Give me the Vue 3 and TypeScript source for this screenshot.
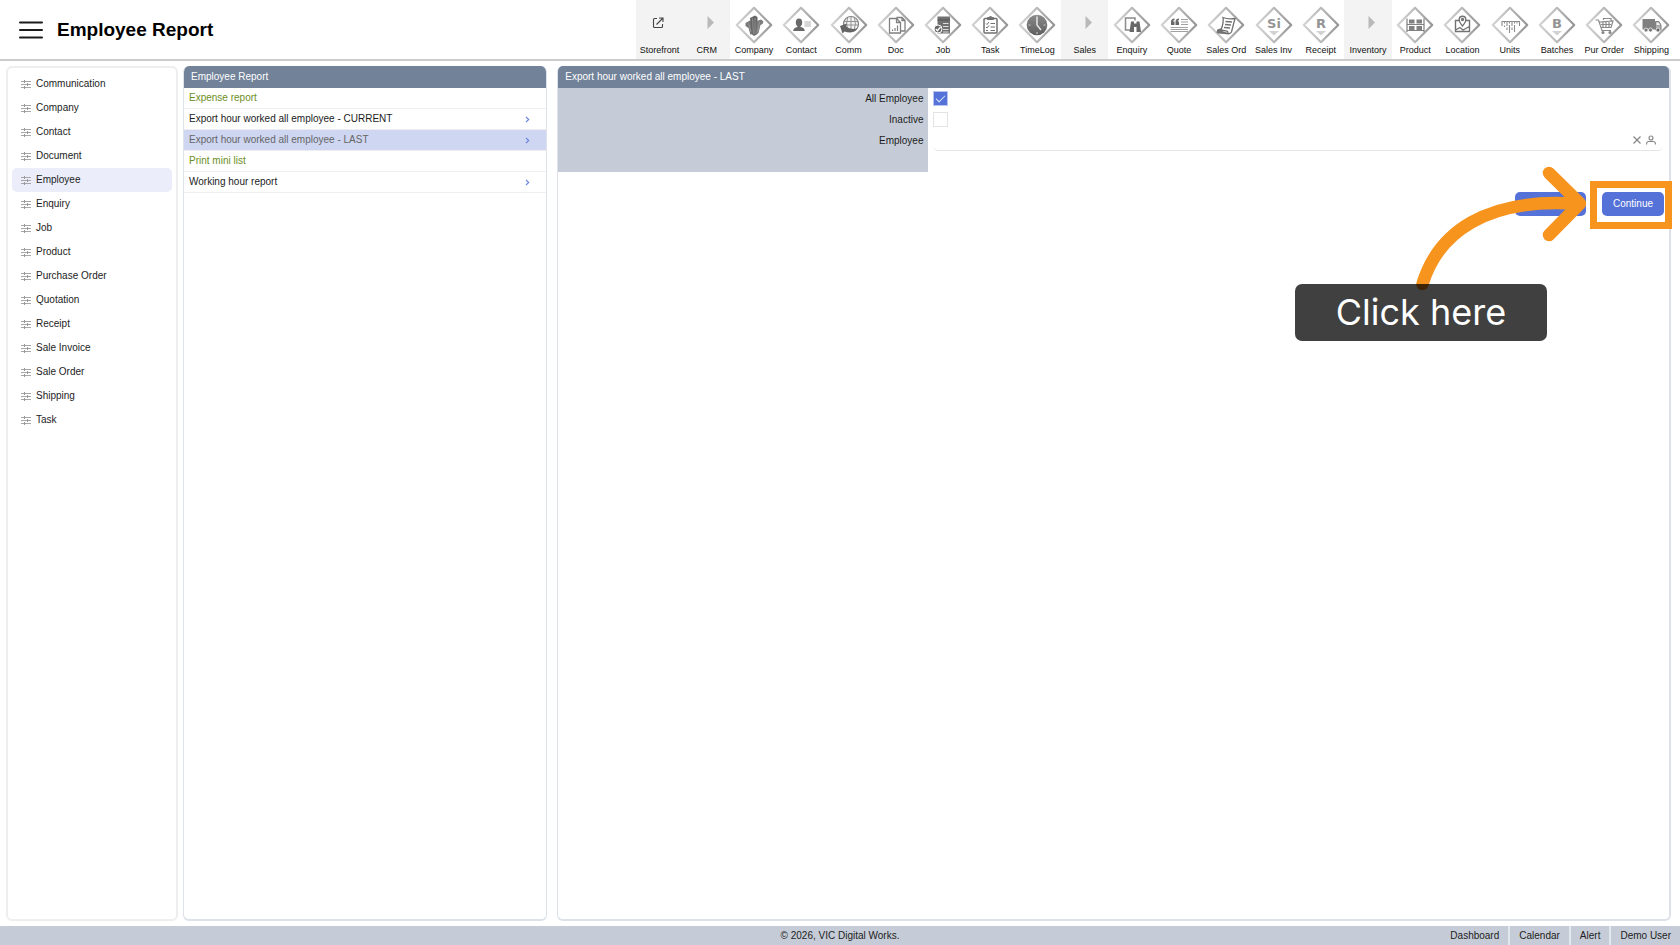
<script setup lang="ts">
import { ref } from 'vue'

interface Tool {
  label: string
  icon: string
  section?: boolean
}

interface Report {
  label: string
  kind: 'print' | 'form'
}

const tools: Tool[] = [
  { label: 'Storefront', icon: 'external', section: true },
  { label: 'CRM', icon: 'triangle', section: true },
  { label: 'Company', icon: 'company' },
  { label: 'Contact', icon: 'contact' },
  { label: 'Comm', icon: 'comm' },
  { label: 'Doc', icon: 'doc' },
  { label: 'Job', icon: 'job' },
  { label: 'Task', icon: 'task' },
  { label: 'TimeLog', icon: 'time' },
  { label: 'Sales', icon: 'triangle', section: true },
  { label: 'Enquiry', icon: 'enquiry' },
  { label: 'Quote', icon: 'quote' },
  { label: 'Sales Ord', icon: 'order' },
  { label: 'Sales Inv', icon: 'Si' },
  { label: 'Receipt', icon: 'R' },
  { label: 'Inventory', icon: 'triangle', section: true },
  { label: 'Product', icon: 'product' },
  { label: 'Location', icon: 'location' },
  { label: 'Units', icon: 'units' },
  { label: 'Batches', icon: 'B' },
  { label: 'Pur Order', icon: 'cart' },
  { label: 'Shipping', icon: 'truck' },
]

const categories: string[] = [
  'Communication', 'Company', 'Contact', 'Document', 'Employee', 'Enquiry', 'Job', 'Product',
  'Purchase Order', 'Quotation', 'Receipt', 'Sale Invoice', 'Sale Order', 'Shipping', 'Task',
]

const reports: Report[] = [
  { label: 'Expense report', kind: 'print' },
  { label: 'Export hour worked all employee - CURRENT', kind: 'form' },
  { label: 'Export hour worked all employee - LAST', kind: 'form' },
  { label: 'Print mini list', kind: 'print' },
  { label: 'Working hour report', kind: 'form' },
]

const footerLinks: string[] = ['Dashboard', 'Calendar', 'Alert', 'Demo User']

const activeCategory = ref('Employee')
const activeReport = ref('Export hour worked all employee - LAST')
const allEmployee = ref(true)
const inactive = ref(false)
const employee = ref('')
</script>

<template>
  <div class="app">
    <header class="topbar">
      <button class="menu" type="button" aria-label="Menu">
        <svg width="24" height="18" viewBox="0 0 24 18">
          <path d="M1 1.500H23M1 9H23M1 16.500H23" fill="none" stroke="#1c1c1c" stroke-width="2" stroke-linecap="round" />
        </svg>
      </button>
      <h1>Employee Report</h1>
      <nav class="tools">
        <a v-for="tool in tools" :key="tool.label" href="#" class="tool" :class="{ section: tool.section }">
          <svg class="tool-icon" viewBox="0 0 38 38" width="38" height="38" aria-hidden="true">
            <defs>
              <linearGradient id="edge" x1="0" y1="0.5" x2="1" y2="0.5">
                <stop offset="0" stop-color="#d2d2d2" />
                <stop offset="0.5" stop-color="#bababa" />
                <stop offset="1" stop-color="#949494" />
              </linearGradient>
              <linearGradient id="shade" x1="0" y1="0" x2="0" y2="1">
                <stop offset="0" stop-color="#8a8a8a" />
                <stop offset="1" stop-color="#5e5e5e" />
              </linearGradient>
            </defs>
            <path v-if="!tool.section" d="M19 1.800L36.200 19L19 36.200L1.800 19Z" fill="#fff" stroke="url(#edge)" stroke-width="2.200" stroke-linejoin="round" />

            <g v-if="tool.icon === 'external'" fill="none" stroke="#444" stroke-width="1.100">
              <path d="M16 12.500H13.500Q12.500 12.500 12.500 13.500V20.500Q12.500 21.500 13.500 21.500H20.500Q21.500 21.500 21.500 20.500V18M15.500 18.500L21.500 12.500M18 12H22V16" />
            </g>
            <path v-else-if="tool.icon === 'triangle'" d="M19.500 10L26 16.500L19.500 23Z" fill="#b9b9b9" />
            <g v-else-if="tool.icon === 'company'">
              <path d="M10.500 17L15 14.500L17 16L18 27L15.500 29L13.500 22L10.500 20Z" fill="#777" />
              <path d="M15 12L20 9.500L22.500 11V28L19 30L16.500 28Z" fill="#666" />
              <path d="M22 15L26 13.500L28.500 15.500L27.500 18L25.500 19L23.500 27L21 28.500Z" fill="#7c7c7c" />
              <path d="M17.500 12.500L18.500 28M20 12V28M24.500 16L22.500 26M13.500 17L16 26" stroke="#a8a8a8" stroke-width=".6" fill="none" />
            </g>
            <g v-else-if="tool.icon === 'contact'" fill="#686868">
              <ellipse cx="17" cy="16.500" rx="3.200" ry="4" />
              <path d="M15.500 19H18.500V21Q22.500 21.500 22.800 25H11.200Q11.500 21.500 15.500 21Z" />
              <path d="M22.500 16H29M22.500 18H29M22.500 20H29" stroke="#b0b0b0" stroke-width="1" />
            </g>
            <g v-else-if="tool.icon === 'comm'">
              <circle cx="21" cy="18" r="7.500" fill="#f2f2f2" stroke="#808080" stroke-width="1.200" />
              <path d="M14 15.500H28M14 19H28M21 10.500V25M17.500 11.500Q15.500 18 18 25M24.500 11.500Q26.500 18 24 25" fill="none" stroke="#8a8a8a" stroke-width=".9" />
              <path d="M10 20L17 17.500L16 20.500Q20 24 27.500 22.500Q23 28.500 14.500 25.500L12.500 27.500Z" fill="#646464" />
            </g>
            <g v-else-if="tool.icon === 'doc'" fill="none" stroke="#808080" stroke-width="1.300">
              <path d="M20 14V11.500H25L28 14.500V25H24M25 11.500V14.500H28" />
              <path d="M12.500 12.500H19.500L23.500 16.500V27H12.500ZM19.500 12.500V16.500H23.500" fill="#fff" />
              <path d="M15.500 25V23.500M18 25V22M20.500 25V19.500" stroke-width="1.200" />
            </g>
            <g v-else-if="tool.icon === 'job'">
              <path d="M13.500 10.500H26V27.500H13.500Z" fill="#707070" />
              <path d="M13.500 14H26" stroke="#555" />
              <path d="M19 17.500H24.500M19 20.500H24.500M19 23.500H24.500M19 26H24.500" stroke="#ddd" stroke-width="1" />
              <circle cx="14" cy="23" r="4" fill="#666" stroke="#fff" />
              <path d="M11.800 23L13.500 24.700L16.500 21" stroke="#fff" stroke-width="1.300" fill="none" />
            </g>
            <g v-else-if="tool.icon === 'task'" fill="none" stroke="#707070">
              <rect x="13" y="12.500" width="13" height="14.500" rx="1" stroke-width="1.500" />
              <path d="M16.500 13.500V11.500H18L19.500 10L21 11.500H22.500V13.500Z" fill="#707070" />
              <path d="M15 17.500L16 18.500L18 16M15 21L16 22L18 19.500M15 24.500H17M19.500 17.500H24M19.500 21H24M19.500 24.500H24" />
            </g>
            <g v-else-if="tool.icon === 'time'">
              <circle cx="19" cy="19" r="10.300" fill="url(#shade)" />
              <path d="M19 11V19L23 24" fill="none" stroke="#e6e6e6" stroke-width="1.500" />
              <path d="M10.500 19H12.500M25.500 19H27.500M19 26V28M19 9.500V11" stroke="#ccc" />
            </g>
            <g v-else-if="tool.icon === 'enquiry'">
              <path d="M17 24H12.500V12H22V14.500" fill="none" stroke="#8a8a8a" stroke-width="1.500" />
              <path d="M18 15.500H21V17.500H23.500V15.500H26.500L28 26H23.500V21H21V26H16.500Z" fill="#686868" />
            </g>
            <g v-else-if="tool.icon === 'quote'">
              <path d="M11 16Q11 12.500 14.500 12.500V14Q13 14.500 13 15.500H14.500V19H11ZM15.500 16Q15.500 12.500 19 12.500V14Q17.500 14.500 17.500 15.500H19V19H15.500Z" fill="#666" />
              <path d="M21 13.500H28M21 16H28M21 18.500H28M10.500 21.500H28M10.500 23.500H28M10.500 25.500H28" stroke="#a2a2a2" stroke-width="1.100" />
            </g>
            <g v-else-if="tool.icon === 'order'" fill="none" stroke="#727272" stroke-width="1.300">
              <path d="M16 11.500Q21 13.500 28 12.500Q26.500 18 24.500 26Q23 28.500 20 27.500Q15 26.500 10.500 26.500Q10 23 14 23.500Q17 17 16 11.500Z" fill="#fff" />
              <path d="M18.500 15.500L25 16M18 18.500L24 19M17 21.500L23 22M14 24L20 25Q22 27 20 27.500" />
              <path d="M10.500 26.500Q10 23 14 23.500L15 25.500L20 27.500Z" fill="#727272" />
            </g>
            <g v-else-if="['Si', 'R', 'B'].includes(tool.icon)">
              <text x="19" y="22" text-anchor="middle" class="glyph">{{ tool.icon }}</text>
              <path d="M14 25H24L19 29.500Z" fill="#d2d2d2" />
            </g>
            <g v-else-if="tool.icon === 'product'">
              <path d="M11 12.500V26M28 12.500V26M11 18.500H28M11 24.500H28" stroke="#808080" stroke-width="1.200" />
              <path d="M13 13.500H18.500V17.500H13ZM20.500 13.500H26V17.500H20.500ZM13 20H18.500V24H13ZM20.500 20H26V24H20.500Z" fill="#808080" />
            </g>
            <g v-else-if="tool.icon === 'location'" fill="none" stroke="#727272" stroke-width="1.400">
              <path d="M16 14.500H12.500V25.500H26.500V14.500H23M12.500 24L17 21.500L20 24L26.500 20.500" />
              <path d="M19.500 20Q15.800 15.500 16.200 13.500A3.300 3.300 0 0 1 22.800 13.500Q23.200 15.500 19.500 20Z" fill="#fff" />
              <circle cx="19.500" cy="13.500" r="1" />
            </g>
            <path v-else-if="tool.icon === 'units'" d="M10.500 15.500H28.500M11 15V20M13.500 15V17.500M16 15V20M18.500 15V17.500M21 15V20M23.500 15V17.500M26 15V17.500M28.500 15V20M13.500 19.500V21M16 21.500V24M18.500 19V27M21 21.500V24M23.500 19V26" fill="none" stroke="#8c8c8c" stroke-width="1.100" />
            <g v-else-if="tool.icon === 'cart'" fill="none" stroke="#8a8a8a" stroke-width="1.200">
              <path d="M10.500 14H13.500L17 24.500H26M14.500 16L28 15L26 21.500H16.500M16 18.500H26M18 16V21M21 16V21M24 16V21M18.500 14V12.500H26V15" />
              <circle cx="18" cy="26.500" r="1" fill="#777" />
              <circle cx="25" cy="26.500" r="1" fill="#777" />
            </g>
            <g v-else-if="tool.icon === 'truck'">
              <path d="M10.500 13H23V23.500H10.500Z" fill="#808080" />
              <path d="M23.500 15.500H27L29 19V24H23.500Z" fill="#aaa" stroke="#808080" />
              <path d="M24.500 16.500H26.500L28 19H24.500Z" fill="#eee" />
              <circle cx="14" cy="24" r="2" fill="#777" stroke="#fff" stroke-width=".7" />
              <circle cx="18.500" cy="24" r="2" fill="#777" stroke="#fff" stroke-width=".7" />
              <circle cx="26" cy="24" r="2" fill="#666" stroke="#fff" stroke-width=".7" />
            </g>
          </svg>
          <span>{{ tool.label }}</span>
        </a>
      </nav>
    </header>

    <main class="workspace">
      <nav class="sidebar">
        <button
          v-for="category in categories"
          :key="category"
          type="button"
          :class="{ active: category === activeCategory }"
          @click="activeCategory = category"
        >
          <svg width="10" height="9" viewBox="0 0 10 9" aria-hidden="true">
            <path d="M0 1.500H10M0 4.500H10M0 7.500H10" stroke="#a6a6a6" />
            <path d="M3.500 0V3M6.500 3V6M3.500 6V9" stroke="#999" />
          </svg>
          {{ category }}
        </button>
      </nav>

      <div class="content">
        <section class="panel">
          <h2>Employee Report</h2>
          <ul class="reports">
            <li v-for="report in reports" :key="report.label">
              <button
                type="button"
                :class="[report.kind, { active: report.label === activeReport }]"
                @click="activeReport = report.label"
              >
                <span>{{ report.label }}</span>
                <svg v-if="report.kind === 'form'" width="5" height="7" viewBox="0 0 5 7" aria-hidden="true">
                  <path d="M1 1L3.700 3.500L1 6" fill="none" stroke="#6f88de" stroke-width="1.200" />
                </svg>
              </button>
            </li>
          </ul>
        </section>

        <section class="panel detail">
          <h2>Export hour worked all employee - LAST</h2>
          <form class="form" @submit.prevent>
            <div class="labels">
              <label for="all-employee">All Employee</label>
              <label for="inactive">Inactive</label>
              <label for="employee">Employee</label>
            </div>
            <div class="fields">
              <div class="field"><input id="all-employee" v-model="allEmployee" type="checkbox" /></div>
              <div class="field"><input id="inactive" v-model="inactive" type="checkbox" /></div>
              <div class="field lookup">
                <input id="employee" v-model="employee" type="text" />
                <button type="button" aria-label="Clear employee" @click="employee = ''">
                  <svg width="10" height="10" viewBox="0 0 10 10"><path d="M1.500 1.500L8.500 8.500M8.500 1.500L1.500 8.500" stroke="#858585" stroke-width="1.200" /></svg>
                </button>
                <button type="button" aria-label="Find employee">
                  <svg width="10" height="10" viewBox="0 0 10 10" fill="none" stroke="#858585" stroke-width="1.100">
                    <circle cx="5" cy="3" r="2" />
                    <path d="M.6 9.500V8.500Q.6 6.500 3 6.500H7Q9.400 6.500 9.400 8.500V9.500" />
                  </svg>
                </button>
              </div>
            </div>
            <div class="actions">
              <button class="primary back" type="button" aria-label="Back"></button>
              <div class="highlight"><button class="primary" type="submit">Continue</button></div>
              <svg class="arrow" width="180" height="130" viewBox="0 0 180 130" aria-hidden="true">
                <g fill="none" stroke="#f7941e" stroke-width="12.500" stroke-linecap="round" stroke-linejoin="round">
                  <path d="M12.500 119C28 68 76 32 168 39" />
                  <path d="M139 8L170 38.500L139 70" />
                </g>
              </svg>
              <div class="callout">Click here</div>
            </div>
          </form>
        </section>
      </div>
    </main>

    <footer class="footer">
      <span class="copyright">© 2026, VIC Digital Works.</span>
      <nav>
        <a v-for="link in footerLinks" :key="link" href="#">{{ link }}</a>
      </nav>
    </footer>
  </div>
</template>

<style>
body {
  background: #fff;
}
</style>

<style scoped>
.app,
.app * {
  box-sizing: border-box;
}

.app {
  display: flex;
  flex-direction: column;
  min-height: 100vh;
  font-family: "Liberation Sans", Arial, sans-serif;
  font-size: 10px;
  line-height: 12px;
  color: #1c1c1c;
}

button,
input {
  font: inherit;
  color: inherit;
}

button {
  margin: 0;
  padding: 0;
  border: 0;
  background: none;
  cursor: pointer;
}

a {
  color: inherit;
  text-decoration: none;
}

.topbar {
  display: flex;
  align-items: center;
  border-bottom: 2px solid #ccc;
  padding: 0 5px 0 19px;
}

.menu svg {
  display: block;
}

h1 {
  margin: 0 auto 0 14px;
  font-size: 19px;
  line-height: 24px;
  color: #000;
  white-space: nowrap;
}

.tools {
  display: grid;
  grid-template-columns: repeat(22, 1fr);
  flex: 0 1 1039px;
}

.tool {
  display: flex;
  flex-direction: column;
  align-items: center;
  padding: 6px 0 3px;
  font-size: 9px;
  color: #111;
  white-space: nowrap;
}

.tool.section {
  background: #f3f3f3;
}

.tool-icon {
  display: block;
}

.glyph {
  font-family: "DejaVu Sans", sans-serif;
  font-size: 13px;
  font-weight: bold;
  fill: #949494;
}

.workspace {
  flex: 1;
  display: grid;
  grid-template-columns: 172px minmax(0, 1fr);
  gap: 5px;
  padding: 5px 9px 5px 6px;
}

.sidebar {
  padding: 4px;
  border: 2px solid #eee;
  border-radius: 6px;
}

.sidebar button {
  display: flex;
  align-items: center;
  gap: 5px;
  width: 100%;
  height: 24px;
  padding: 0 9px;
  border-radius: 5px;
  text-align: left;
}

.sidebar .active {
  background: #ebeefa;
}

.content {
  display: grid;
  grid-template-columns: minmax(0, 364fr) minmax(0, 1113fr);
  gap: 10px;
}

.panel {
  border: 1px solid #dde2ea;
  border-top: 0;
  border-bottom-width: 2px;
  border-radius: 6px;
  overflow: hidden;
}

.panel h2 {
  margin: 0;
  padding: 5px 7px;
  background: #718299;
  font-size: 10px;
  line-height: 12px;
  font-weight: normal;
  color: #fff;
}

.detail {
  border-right-width: 2px;
  overflow: visible;
}

.detail h2 {
  border-radius: 5px 5px 0 0;
}

.reports {
  margin: 0;
  padding: 0;
  list-style: none;
}

.reports li {
  border-bottom: 1px solid #eee;
}

.reports button {
  display: flex;
  align-items: center;
  justify-content: space-between;
  width: 100%;
  height: 20px;
  padding: 0 16px 0 5px;
  text-align: left;
}

.reports .print {
  color: #6b8e23;
}

.reports .active {
  background: #ced6f1;
  color: #666;
}

.form {
  display: grid;
  grid-template-columns: 1fr 2fr;
}

.labels {
  display: flex;
  flex-direction: column;
  padding-bottom: 21px;
  background: #c6ccd7;
  text-align: right;
}

.labels label {
  padding: 5px 5px 4px;
}

.fields {
  padding: 0 6px 0 5px;
}

.field {
  display: flex;
  align-items: center;
  height: 21px;
}

.field input[type="checkbox"] {
  appearance: none;
  display: grid;
  place-items: center;
  width: 15px;
  height: 15px;
  margin: 0;
  border: 1px solid #e3e3e3;
}

.field input[type="checkbox"]:checked {
  border-color: #b9c5ef;
  background: #5472d8;
}

.field input[type="checkbox"]:checked::before {
  content: "";
  width: 8px;
  height: 4px;
  border: solid #dce3f8;
  border-width: 0 0 1px 1px;
  transform: translateY(-1px) rotate(-45deg);
}

.lookup {
  gap: 4px;
  padding-right: 7px;
  border-bottom: 1px solid #e6e6e6;
  border-radius: 5px;
}

.lookup input {
  flex: 1;
  min-width: 0;
  height: 18px;
  border: 0;
  outline: 0;
  background: none;
}

.lookup button,
.lookup svg {
  display: block;
  height: 10px;
}

.actions {
  position: relative;
  grid-column: 1 / -1;
  display: flex;
  justify-content: flex-end;
  gap: 16px;
  padding: 20px 5px 0 0;
}

.primary {
  height: 24px;
  padding: 0 11px;
  border-radius: 5px;
  background: #5472d8;
  color: #fff;
}

.back {
  width: 71px;
}

.highlight {
  position: relative;
}

.highlight::after {
  content: "";
  position: absolute;
  inset: -11px -8px -13px -12px;
  border: 7px solid #f7941e;
  pointer-events: none;
}

.arrow {
  position: absolute;
  right: 79px;
  top: -7px;
}

.callout {
  position: absolute;
  right: 122px;
  top: 112px;
  width: 252px;
  border-radius: 7px;
  background: rgba(0, 0, 0, 0.75);
  color: #fff;
  font-family: Inter, sans-serif;
  font-size: 36px;
  font-weight: 400;
  line-height: 57px;
  text-align: center;
  white-space: nowrap;
}

.footer {
  display: grid;
  grid-template-columns: 1fr auto 1fr;
  background: #c6ccd7;
  line-height: 19px;
}

.copyright {
  grid-column: 2;
}

.footer nav {
  display: flex;
  justify-content: flex-end;
}

.footer a {
  padding: 0 9px;
}

.footer a + a {
  border-left: 2px solid #e3e7ee;
}
</style>
